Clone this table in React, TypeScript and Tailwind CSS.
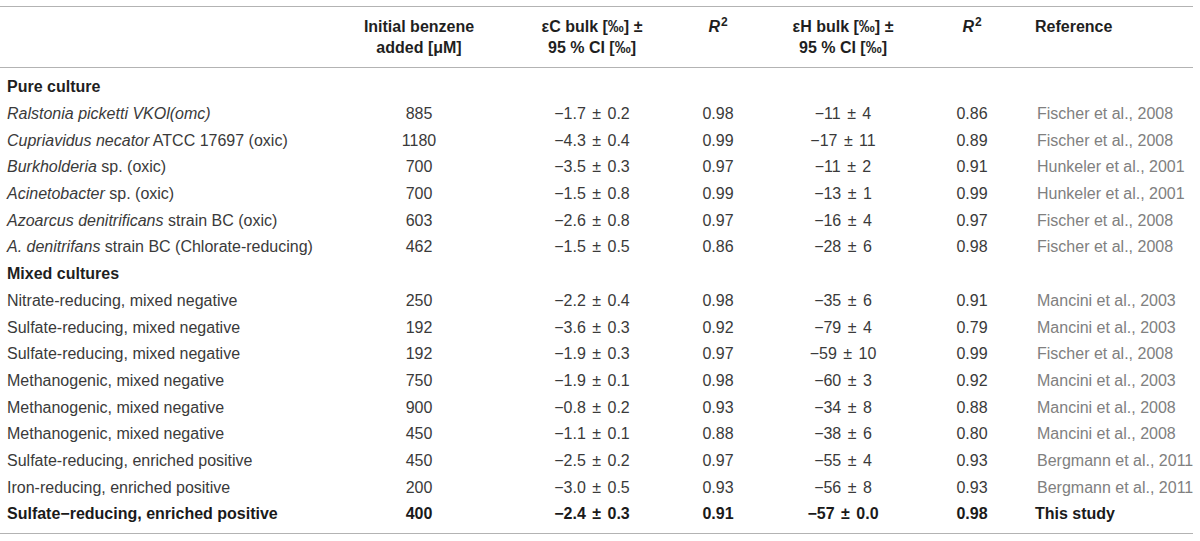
type Row = {
  name: React.ReactNode;
  init: string;
  ec: string;
  r1: string;
  eh: string;
  r2: string;
  ref: string;
};

const pure: Row[] = [
  { name: <i>Ralstonia picketti VKOl(omc)</i>, init: "885", ec: "−1.7 ± 0.2", r1: "0.98", eh: "−11 ± 4", r2: "0.86", ref: "Fischer et al., 2008" },
  { name: <><i>Cupriavidus necator</i> ATCC 17697 (oxic)</>, init: "1180", ec: "−4.3 ± 0.4", r1: "0.99", eh: "−17 ± 11", r2: "0.89", ref: "Fischer et al., 2008" },
  { name: <><i>Burkholderia</i> sp. (oxic)</>, init: "700", ec: "−3.5 ± 0.3", r1: "0.97", eh: "−11 ± 2", r2: "0.91", ref: "Hunkeler et al., 2001" },
  { name: <><i>Acinetobacter</i> sp. (oxic)</>, init: "700", ec: "−1.5 ± 0.8", r1: "0.99", eh: "−13 ± 1", r2: "0.99", ref: "Hunkeler et al., 2001" },
  { name: <><i>Azoarcus denitrificans</i> strain BC (oxic)</>, init: "603", ec: "−2.6 ± 0.8", r1: "0.97", eh: "−16 ± 4", r2: "0.97", ref: "Fischer et al., 2008" },
  { name: <><i>A. denitrifans</i> strain BC (Chlorate-reducing)</>, init: "462", ec: "−1.5 ± 0.5", r1: "0.86", eh: "−28 ± 6", r2: "0.98", ref: "Fischer et al., 2008" },
];

const mixed: Row[] = [
  { name: "Nitrate-reducing, mixed negative", init: "250", ec: "−2.2 ± 0.4", r1: "0.98", eh: "−35 ± 6", r2: "0.91", ref: "Mancini et al., 2003" },
  { name: "Sulfate-reducing, mixed negative", init: "192", ec: "−3.6 ± 0.3", r1: "0.92", eh: "−79 ± 4", r2: "0.79", ref: "Mancini et al., 2003" },
  { name: "Sulfate-reducing, mixed negative", init: "192", ec: "−1.9 ± 0.3", r1: "0.97", eh: "−59 ± 10", r2: "0.99", ref: "Fischer et al., 2008" },
  { name: "Methanogenic, mixed negative", init: "750", ec: "−1.9 ± 0.1", r1: "0.98", eh: "−60 ± 3", r2: "0.92", ref: "Mancini et al., 2003" },
  { name: "Methanogenic, mixed negative", init: "900", ec: "−0.8 ± 0.2", r1: "0.93", eh: "−34 ± 8", r2: "0.88", ref: "Mancini et al., 2008" },
  { name: "Methanogenic, mixed negative", init: "450", ec: "−1.1 ± 0.1", r1: "0.88", eh: "−38 ± 6", r2: "0.80", ref: "Mancini et al., 2008" },
  { name: "Sulfate-reducing, enriched positive", init: "450", ec: "−2.5 ± 0.2", r1: "0.97", eh: "−55 ± 4", r2: "0.93", ref: "Bergmann et al., 2011" },
  { name: "Iron-reducing, enriched positive", init: "200", ec: "−3.0 ± 0.5", r1: "0.93", eh: "−56 ± 8", r2: "0.93", ref: "Bergmann et al., 2011" },
];

const grid = "grid grid-cols-[340px_158px_188px_64px_186px_72px_185px]";

// "−1.7 ± 0.2": give the ± a bit more room, as in the typeset original
function PlusMinus({ v }: { v: string }) {
  const [a, b] = v.split(" ± ");
  return (
    <span className="whitespace-nowrap">
      {a} <span className="mx-[2px]">±</span> {b}
    </span>
  );
}

function DataRow({ r }: { r: Row }) {
  return (
    <div className={`${grid} h-[26.7px] items-center text-[#3a3a3a]`}>
      <div className="pl-[7px] whitespace-nowrap">{r.name}</div>
      <div className="text-center">{r.init}</div>
      <div className="text-center"><PlusMinus v={r.ec} /></div>
      <div className="text-center">{r.r1}</div>
      <div className="text-center"><PlusMinus v={r.eh} /></div>
      <div className="text-center">{r.r2}</div>
      <div className="pl-[29px] whitespace-nowrap text-[#808080]">{r.ref}</div>
    </div>
  );
}

function GroupRow({ title }: { title: string }) {
  return (
    <div className="h-[26.7px] flex items-center pl-[7px] font-bold text-[#1f1f1f]">
      {title}
    </div>
  );
}

function RSquared() {
  return (
    <div className="text-center">
      <i>R</i>
      <sup className="text-[12px] ml-[1px]">2</sup>
    </div>
  );
}

export default function App() {
  return (
    <div
      className="bg-white w-[1200px] h-[541px] pt-[6px] text-[16px]"
      style={{ fontFamily: '"Liberation Sans", Arial, sans-serif' }}
    >
      <div className="w-[1193px] border-t border-b border-[#b3b3b3]">
        {/* header */}
        <div className={`${grid} h-[61px] pt-[9px] leading-[21px] font-bold text-[#1f1f1f] border-b border-[#b3b3b3]`}>
          <div></div>
          <div className="text-center">Initial benzene<br />added [μM]</div>
          <div className="text-center">εC bulk [‰] ±<br />95 % CI [‰]</div>
          <RSquared />
          <div className="text-center">εH bulk [‰] ±<br />95 % CI [‰]</div>
          <RSquared />
          <div className="pl-[27px]">Reference</div>
        </div>

        {/* body */}
        <div className="pt-[6px] pb-[5px]">
          <GroupRow title="Pure culture" />
          {pure.map((r, i) => (
            <DataRow key={"p" + i} r={r} />
          ))}
          <GroupRow title="Mixed cultures" />
          {mixed.map((r, i) => (
            <DataRow key={"m" + i} r={r} />
          ))}
          <div className={`${grid} h-[26.7px] items-center font-bold text-[#1a1a1a]`}>
            <div className="pl-[7px] whitespace-nowrap">Sulfate−reducing, enriched positive</div>
            <div className="text-center">400</div>
            <div className="text-center"><PlusMinus v="−2.4 ± 0.3" /></div>
            <div className="text-center">0.91</div>
            <div className="text-center"><PlusMinus v="−57 ± 0.0" /></div>
            <div className="text-center">0.98</div>
            <div className="pl-[27px]">This study</div>
          </div>
        </div>
      </div>
    </div>
  );
}
